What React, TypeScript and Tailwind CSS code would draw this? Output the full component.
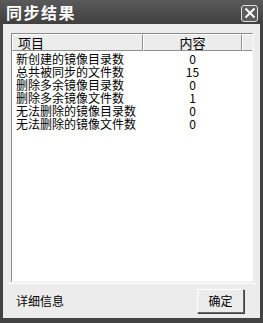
import React from 'react';

const rows: [string, string][] = [
  ['新创建的镜像目录数', '0'],
  ['总共被同步的文件数', '15'],
  ['删除多余镜像目录数', '0'],
  ['删除多余镜像文件数', '1'],
  ['无法删除的镜像目录数', '0'],
  ['无法删除的镜像文件数', '0'],
];

const font = { fontFamily: '"Noto Sans CJK SC", "Noto Sans", sans-serif' };

export default function App() {
  return (
    <div className="w-[263px] h-[323px] bg-[#434343] flex flex-col select-none" style={font}>
      {/* Title bar */}
      <div className="h-[24px] flex items-center justify-between pl-[6px] pr-[5px] bg-gradient-to-b from-[#5a5a5a] to-[#404040]">
        <span className="text-white font-bold text-[16px] leading-none tracking-[1.5px]">同步结果</span>
        <div className="mt-[2px] w-[17px] h-[17px] rounded-[3px] border border-[#e0e0e0] bg-[#5c5c5c] flex items-center justify-center">
          <svg width="12" height="12" viewBox="0 0 12 12">
            <path d="M1.5 1.5 L10.5 10.5 M10.5 1.5 L1.5 10.5" stroke="#fff" strokeWidth="2" />
          </svg>
        </div>
      </div>

      {/* Body */}
      <div className="flex-1 mx-[3px] mb-[5px] bg-[#ececec] flex flex-col px-[8px] pt-[9px]">
        {/* List view */}
        <div className="h-[249px] w-[242px] bg-white border border-t-[#8a8a8a] border-l-[#8a8a8a] border-r-[#f8f8f8] border-b-[#f8f8f8] flex flex-col">
          <div className="flex h-[17px] text-[13px] leading-[16px] text-black">
            <div className="w-[131px] bg-[#ececec] border-r border-b border-r-[#909090] border-b-[#909090] border-t border-l border-t-white border-l-white pl-[5px]">
              项目
            </div>
            <div className="w-[99px] bg-[#ececec] border-r border-b border-r-[#909090] border-b-[#909090] border-t border-l border-t-white border-l-white text-center">
              内容
            </div>
            <div className="flex-1 bg-[#ececec] border-b border-b-[#909090] border-t border-l border-t-white border-l-white" />
          </div>
          <div className="flex flex-col pt-[1px]">
            {rows.map(([k, v]) => (
              <div key={k} className="flex h-[13px] text-[12px] leading-[13px] text-black">
                <div className="w-[131px] pl-[4px] whitespace-nowrap">{k}</div>
                <div className="w-[99px] text-center">{v}</div>
              </div>
            ))}
          </div>
        </div>
        <div className="h-[1px] bg-white mt-[1px] -mx-[4px]" />

        {/* Footer */}
        <div className="flex items-center justify-between flex-1 pl-[5px] pr-[8px]">
          <span className="text-[12px] text-black">详细信息</span>
          <button className="w-[47px] h-[24px] bg-[#ececec] border border-t-white border-l-white border-r-[#6a6a6a] border-b-[#6a6a6a] shadow-[1px_1px_0_#404040] text-[12px] text-black">
            确定
          </button>
        </div>
      </div>
    </div>
  );
}
